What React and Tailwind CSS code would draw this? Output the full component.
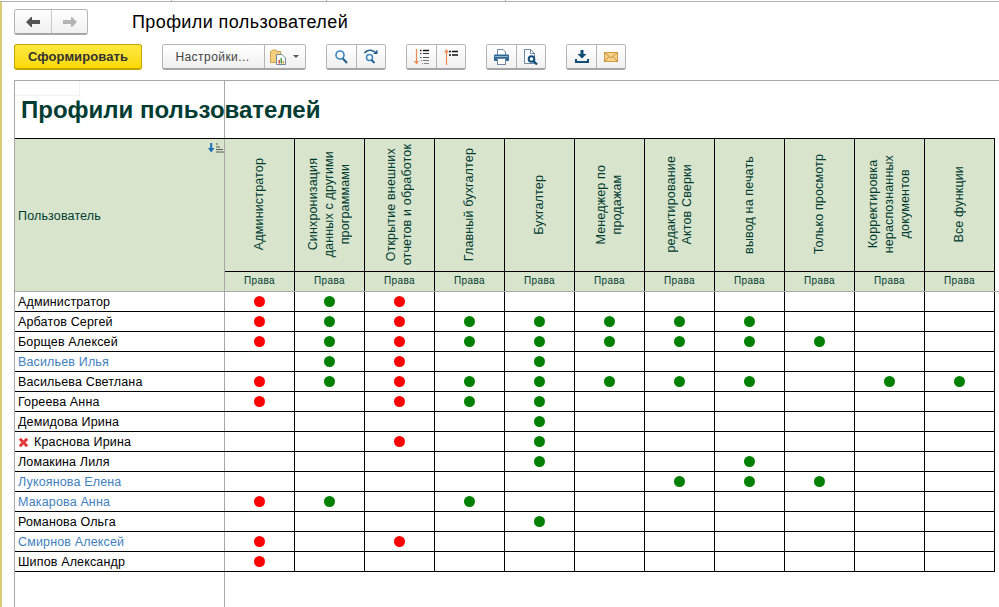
import React from 'react';

const COLUMNS = [
    'Администратор',
    'Синхронизация\nданных с другими\nпрограммами',
    'Открытие внешних\nотчетов и обработок',
    'Главный бухгалтер',
    'Бухгалтер',
    'Менеджер по\nпродажам',
    'редактирование\nАктов Сверки',
    'вывод на печать',
    'Только просмотр',
    'Корректировка\nнераспознанных\nдокументов',
    'Все функции',
];

// r = red dot, g = green dot, . = empty
const USERS = [
    { name: 'Администратор', marks: 'rgr........' },
    { name: 'Арбатов Сергей', marks: 'rgrggggg...' },
    { name: 'Борщев Алексей', marks: 'rgrgggggg..' },
    { name: 'Васильев Илья', marks: '.gr.g......', blue: true },
    { name: 'Васильева Светлана', marks: 'rgrggggg.gg' },
    { name: 'Гореева Анна', marks: 'r.rgg......' },
    { name: 'Демидова Ирина', marks: '....g......' },
    { name: 'Краснова Ирина', marks: '..r.g......', removed: true },
    { name: 'Ломакина Лиля', marks: '....g..g...' },
    { name: 'Лукоянова Елена', marks: '......ggg..', blue: true },
    { name: 'Макарова Анна', marks: 'rg.g.......', blue: true },
    { name: 'Романова Ольга', marks: '....g......' },
    { name: 'Смирнов Алексей', marks: 'r.r........', blue: true },
    { name: 'Шипов Александр', marks: 'r..........' },
];

const ArrowLeft = ({ color }) => (
    <svg width="14" height="10" viewBox="0 0 14 10"><path d="M0 5 L5 0 H6 V3 H14 V7 H6 V10 H5 Z" fill={color} /></svg>
);

const ArrowRight = ({ color }) => (
    <svg width="14" height="10" viewBox="0 0 14 10"><path d="M14 5 L9 0 H8 V3 H0 V7 H8 V10 H9 Z" fill={color} /></svg>
);

const ReportFolder = () => (
    <svg width="16" height="16" viewBox="0 0 16 16">
        <path d="M0.5 2.5 H1.5 L2.5 1 H6 L7 2.5 H10.5 V13.5 H0.5 Z" fill="#f5d07a" stroke="#cfa24c" />
        <path d="M6.5 5.5 H12 L15.5 9 V15.5 H6.5 Z" fill="#f7fafc" stroke="#74879b" />
        <rect x="8.5" y="11" width="1.5" height="3.5" fill="#d94a3a" />
        <rect x="10.5" y="9" width="1.5" height="5.5" fill="#4aa04a" />
        <rect x="12.5" y="12" width="1.5" height="2.5" fill="#e0a030" />
    </svg>
);

const SearchIcon = () => (
    <svg width="13" height="14" viewBox="0 0 13 14">
        <circle cx="5" cy="5" r="4" fill="none" stroke="#3a85bd" strokeWidth="1.6" />
        <path d="M7.8 8.5 L12 13" stroke="#24608f" strokeWidth="2" />
    </svg>
);

const SearchNextIcon = () => (
    <svg width="14" height="15" viewBox="0 0 14 15">
        <path d="M0.5 4 C3 0.5 8 0.5 11 3" fill="none" stroke="#24608f" strokeWidth="1.6" />
        <path d="M13.5 0.5 V5 H9 Z" fill="#24608f" />
        <circle cx="5.5" cy="8.5" r="3" fill="none" stroke="#3a85bd" strokeWidth="1.5" />
        <path d="M7.5 11 L10.5 14" stroke="#24608f" strokeWidth="2" />
    </svg>
);

const SortDownIcon = () => (
    <svg width="15" height="16" viewBox="0 0 15 16">
        <path d="M2.5 0 V13" stroke="#ee8a50" strokeWidth="1.2" />
        <path d="M0 12 H5 L2.5 15.5 Z" fill="#ee8a50" />
        <path d="M6 1.5 H7.5 M9 1.5 H15" stroke="#111" strokeWidth="1.3" />
        <path d="M6 4.5 H7.5 M9 4.5 H15" stroke="#333" strokeWidth="1.2" />
        <path d="M6 8.5 H7.5 M9 8.5 H15" stroke="#555" strokeWidth="1.1" />
        <path d="M7 11.5 H8 M9 11.5 H15" stroke="#777" strokeWidth="1" />
        <path d="M8 14.5 H9 M10 14.5 H15" stroke="#888" strokeWidth="1" />
    </svg>
);

const SortUpIcon = () => (
    <svg width="14" height="16" viewBox="0 0 14 16">
        <path d="M2.5 3 V16" stroke="#ee8a50" strokeWidth="1.2" />
        <path d="M0 3.5 H5 L2.5 0 Z" fill="#ee8a50" />
        <path d="M5 2.5 H7 M8 2.5 H14 M5 6 H7 M8 6 H14" stroke="#111" strokeWidth="1.3" />
    </svg>
);

const PrintIcon = () => (
    <svg width="15" height="16" viewBox="0 0 15 16">
        <path d="M3.5 6 V0.5 H9 L11.5 3 V6" fill="#fff" stroke="#6d88a5" />
        <rect x="0" y="5.5" width="15" height="6.5" rx="1" fill="#2f6a96" />
        <rect x="1" y="7" width="13" height="1" fill="#8fb2cc" />
        <rect x="3.5" y="9.5" width="8" height="6" fill="#fff" stroke="#6d88a5" />
    </svg>
);

const PreviewIcon = () => (
    <svg width="14" height="16" viewBox="0 0 14 16">
        <path d="M0.5 0.5 H6.5 L10.5 4.5 V14.5 H0.5 Z" fill="#fff" stroke="#6d88a5" />
        <path d="M6.5 0.5 V4.5 H10.5" fill="none" stroke="#6d88a5" />
        <circle cx="7.5" cy="10" r="2.8" fill="#fff" stroke="#0f4d78" strokeWidth="2" />
        <path d="M9.5 12 L13 15.5" stroke="#0f4d78" strokeWidth="2.2" />
    </svg>
);

const DownloadIcon = () => (
    <svg width="14" height="13" viewBox="0 0 14 13">
        <path d="M5.5 0 H8.5 V4 H11.5 L7 8.5 L2.5 4 H5.5 Z" fill="#0f4d78" />
        <path d="M0 9 H2 V11 H12 V9 H14 V13 H0 Z" fill="#0f4d78" />
    </svg>
);

const MailIcon = () => (
    <svg width="14" height="10" viewBox="0 0 14 10">
        <rect x="0.5" y="0.5" width="13" height="9" fill="#f7d28c" stroke="#d39a3f" />
        <path d="M1 1 L7 6 L13 1 M1 9 L5 4.5 M13 9 L9 4.5" fill="none" stroke="#c98f3a" strokeWidth="1" />
    </svg>
);

const SortMark = () => (
    <svg width="16" height="10" viewBox="0 0 16 10">
        <path d="M2.2 0 H4.2 V5 H6.5 L3.2 9.5 L0 5 H2.2 Z" fill="#1f6fb5" />
        <path d="M8 1 H10 M8 4 H12 M8 6.5 H15 M8 9 H16" stroke="#555" strokeWidth="1" />
    </svg>
);

const CrossIcon = () => (
    <svg width="11" height="11" viewBox="0 0 11 11">
        <path d="M1.8 1.8 L9.2 9.2 M9.2 1.8 L1.8 9.2" stroke="#e2393b" strokeWidth="3" />
    </svg>
);

const BTN = 'flex items-center justify-center h-full bg-gradient-to-b from-white to-[#f0f0f0]';
const GROUP = 'flex h-[26px] rounded-[3px] border border-[#b5b5b5] border-b-2 border-b-[#a6a6a6] overflow-hidden';

const IconGroup = ({ left, right }) => (
    <div className={`${GROUP} w-[60px]`}>
        <div className={`${BTN} w-[30px] border-r border-[#b5b5b5]`}>{left}</div>
        <div className={`${BTN} flex-1`}>{right}</div>
    </div>
);

const Dot = ({ kind }) => (
    <div className={`w-[11px] h-[11px] rounded-full ${kind === 'r' ? 'bg-[#ff0000]' : 'bg-[#008000]'}`}></div>
);

const App = () => {
    return (
        <div className="w-[999px] h-[607px] flex flex-col overflow-hidden bg-white font-['Liberation_Sans',Arial,sans-serif] text-black">
            {/* TOP WINDOW EDGE */}
            <div className="h-[2px] shrink-0 border-b border-[#b0b0b0] flex">
                <div className="w-[172px] border-r border-[#b0b0b0]"></div>
                <div className="w-[155px] border-r border-[#b0b0b0]"></div>
                <div className="w-[179px] border-r border-[#b0b0b0]"></div>
            </div>

            <div className="flex-1 flex flex-col min-h-0 border-l-2 border-[#dccb73]">
                {/* TITLE ROW */}
                <div className="h-[24px] mt-[8px] shrink-0 flex items-center pl-[12px]">
                    <div className={`${GROUP} w-[74px] h-[24px]`}>
                        <div className={`${BTN} w-[37px] border-r border-[#c8c8c8]`}><ArrowLeft color="#555555" /></div>
                        <div className={`${BTN} flex-1`}><ArrowRight color="#b4b4b4" /></div>
                    </div>
                    <h1 className="ml-[44px] text-[18px] leading-[24px] font-normal tracking-[0.4px]">Профили пользователей</h1>
                </div>

                {/* COMMAND BAR */}
                <div className="h-[26px] mt-[10px] shrink-0 flex items-center gap-[20px] pl-[12px]">
                    <div className="w-[128px] h-[26px] flex items-center justify-center rounded-[3px] border border-[#c5a600] border-b-2 bg-gradient-to-b from-[#ffe93d] to-[#fad900] text-[13px] text-[#333] font-bold tracking-[0.1px]">
                        Сформировать
                    </div>
                    <div className={`${GROUP} w-[144px]`}>
                        <div className={`${BTN} w-[102px] border-r border-[#b5b5b5] text-[12px] text-[#444] tracking-[0.45px] pt-[1px] pr-[2px]`}>Настройки...</div>
                        <div className={`${BTN} flex-1 justify-start pl-[5px] gap-[7px]`}>
                            <ReportFolder />
                            <div className="w-0 h-0 border-x-[3px] border-x-transparent border-t-[3px] border-t-[#555]"></div>
                        </div>
                    </div>
                    <IconGroup left={<SearchIcon />} right={<SearchNextIcon />} />
                    <IconGroup left={<SortDownIcon />} right={<SortUpIcon />} />
                    <IconGroup left={<PrintIcon />} right={<PreviewIcon />} />
                    <IconGroup left={<DownloadIcon />} right={<MailIcon />} />
                </div>

                {/* REPORT */}
                <div className="flex-1 mt-[10px] ml-[12px] flex flex-col border-t border-l border-t-[#a8a8a8] border-l-[#a8a8a8]">
                    <div className="h-[57px] shrink-0 w-[210px] border-r border-[#a8a8a8]">
                        <div className="w-[65px] h-[15px] border-r border-b border-[#f2f2f2]"></div>
                        <div className="ml-[6px] whitespace-nowrap text-[24px] leading-[28px] font-bold text-[#003c32]">
                            Профили пользователей
                        </div>
                    </div>

                    {/* HEADER */}
                    <div className="h-[154px] shrink-0 border-b border-[#a8a8a8]">
                        <div className="h-full w-[980px] flex border-t border-black">
                            <div className="w-[210px] shrink-0 bg-[#d8e4cc] border-r border-[#a8a8a8] relative flex items-center pl-[3px] pt-[2px] text-[12.5px] text-[#003c32] tracking-[0.15px]">
                                <div className="absolute top-[4px] right-0"><SortMark /></div>
                                Пользователь
                            </div>
                            {COLUMNS.map((col) => (
                                <div key={col} className="w-[70px] shrink-0 bg-[#d8e4cc] border-r border-black flex flex-col">
                                    <div className="h-[133px] pb-[1px] pr-[1px] border-b border-black flex items-center justify-center">
                                        <span className="[writing-mode:vertical-rl] rotate-180 whitespace-pre-line text-center text-[12.5px] leading-[16px] text-[#003c32] tracking-[0.15px]">{col}</span>
                                    </div>
                                    <div className="flex-1 pb-[3px] flex items-center justify-center text-[10px] text-[#003c32] tracking-[0.4px]">Права</div>
                                </div>
                            ))}
                        </div>
                    </div>

                    {/* ROWS */}
                    {USERS.map((user) => (
                        <div key={user.name} className="h-[20px] shrink-0 flex w-[980px] border-b border-black">
                            <div className={`w-[210px] shrink-0 border-r border-[#a8a8a8] flex items-center pl-[3px] pt-[1px] text-[12.5px] tracking-[0.15px] ${user.blue ? 'text-[#4280bd]' : 'text-black'}`}>
                                {user.removed && <span className="mr-[5px] flex"><CrossIcon /></span>}
                                {user.name}
                            </div>
                            {user.marks.split('').map((mark, i) => (
                                <div key={i} className="w-[70px] shrink-0 border-r border-black flex items-center justify-center">
                                    {mark !== '.' && <Dot kind={mark} />}
                                </div>
                            ))}
                        </div>
                    ))}

                    <div className="flex-1 w-[210px] border-r border-[#a8a8a8]"></div>
                </div>
            </div>
        </div>
    );
};

export default App;
